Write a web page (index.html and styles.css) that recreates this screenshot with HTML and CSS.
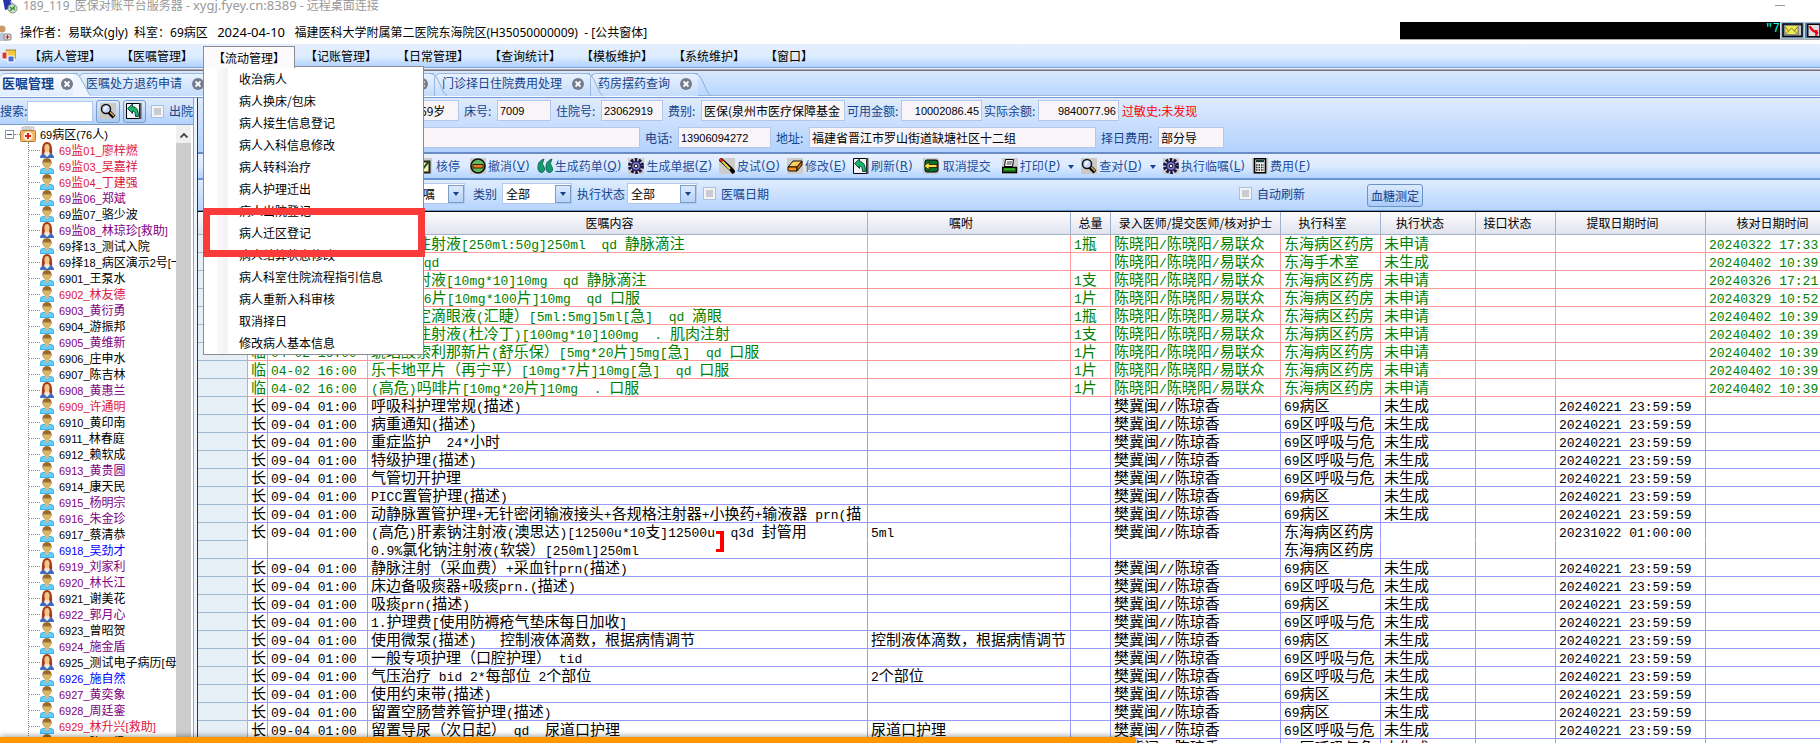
FILE: index.html
```html
<!DOCTYPE html>
<html lang="zh-CN">
<head>
<meta charset="utf-8">
<title>医嘱管理</title>
<link rel="stylesheet" href="styles.css">
</head>
<body>
<svg class="defs" aria-hidden="true">
  <symbol id="man" viewBox="0 0 14 16"><path d="M0 16v-3q0-3 4-3h6q4 0 4 3v3z" fill="#3fb4ee"/><path d="M1 15v-2q0-2 3-2h6q3 0 3 2v2z" fill="#66ccfa"/><path d="M5 9h4v2l-2 2-2-2z" fill="#e8b878"/><ellipse cx="7" cy="5.500" rx="4.200" ry="5" fill="#d8b56a"/><path d="M2.500 7Q1.500 0 7 0t4.500 7L10.500 4Q7 5 3.500 4z" fill="#9a6a2c"/></symbol>
  <symbol id="woman" viewBox="0 0 14 16"><path d="M2 13Q1 0 7 0t5 13z" fill="#a63c14"/><path d="M0 16q0-4 4-4.500l3 1 3-1q4 .5 4 4.500z" fill="#3c6cc0"/><path d="M5 9h4l1 3-3 3-3-3z" fill="#f6e4d4"/><ellipse cx="7" cy="6" rx="2.600" ry="4" fill="#f0c48c"/></symbol>
  <symbol id="ward" viewBox="0 0 16 16"><path d="M2 1h2v4H2zM5 0h2v4H5zM8 0h2v4H8zM11 1h3v4h-3z" fill="#e4e4e4" stroke="#999" stroke-width=".5"/><rect x=".5" y="4.500" width="15" height="11" rx="1" fill="#f3b562" stroke="#b87a38"/><circle cx="8" cy="10" r="4.500" fill="#fff4e4"/><path d="M7 7h2v2h2v2H9v2H7v-2H5V9h2z" fill="#e02010"/></symbol>
  <symbol id="search" viewBox="0 0 16 16"><path d="M0 0h16v16H0z" fill="#ccc8c4"/><path d="M9 9l5 5" stroke="#000" stroke-width="4"/><path d="M10 9l4 4" stroke="#e8b050" stroke-width="1.500"/><circle cx="6" cy="6" r="4.500" fill="#c8d8fa" stroke="#111" stroke-width="1.500"/><path d="M4 7l3-4" stroke="#fff" stroke-width="1.500"/></symbol>
  <symbol id="refresh" viewBox="0 0 16 16"><path d="M.5.5h13v15H.5z" fill="#f4f4f4" stroke="#000"/><path d="M14.500 0v16" stroke="#555" stroke-width="2"/><path d="M1.500 5.500L6.500 1v2.500q6 .5 6 10H9.500q0-5.500-3-5.500v2.500z" fill="#18b868" stroke="#023" stroke-width=".8"/></symbol>
  <symbol id="check" viewBox="0 0 16 16"><path d="M0 0h16v16H0z" fill="#ccc"/><path d="M1.500 3.500h12v11h-12z" fill="#f3f0b0" stroke="#222" stroke-width="2"/><path d="M4 9l2 3 7-9" stroke="#174a18" stroke-width="2" fill="none"/></symbol>
  <symbol id="minus" viewBox="0 0 16 16"><path d="M0 0h16v16H0z" fill="#ccc"/><circle cx="8" cy="8" r="7" fill="#62b85c" stroke="#111" stroke-width="1.600"/><rect x="3" y="6.500" width="10" height="3.500" fill="#f27820" stroke="#320" /></symbol>
  <symbol id="quote" viewBox="0 0 16 16"><path d="M7 1Q0 3 1 11q1 4 4 3.500Q9 13 7 9 4 6 7 1zM15 1Q8 3 9 11q1 4 4 3.500Q17 13 15 9q-3-3 0-8z" fill="#149a70" stroke="#075540" stroke-width=".8"/></symbol>
  <symbol id="gear" viewBox="0 0 16 16"><path d="M0 0h16v16H0z" fill="#d0cccc"/><circle cx="8" cy="8" r="6.500" fill="none" stroke="#18143c" stroke-width="3" stroke-dasharray="2.600 1.480"/><circle cx="8" cy="8" r="4.500" fill="#8580d0" stroke="#242060" stroke-width="1.500"/><circle cx="8" cy="8" r="1.800" fill="#fff" stroke="#111"/></symbol>
  <symbol id="pen" viewBox="0 0 16 16"><path d="M0 0h16v16H0z" fill="#ccc"/><path d="M1 1l11 10 3 4" stroke="#000" stroke-width="4" fill="none"/><path d="M3 3l8 8" stroke="#f2d838" stroke-width="2"/><path d="M1 1l2.500 2.500" stroke="#e02818" stroke-width="2.500"/></symbol>
  <symbol id="eraser" viewBox="0 0 16 16"><path d="M0 0h16v16H0z" fill="#ccc"/><path d="M1 9l5-6h9l-5 6z" fill="#ffc860" stroke="#110"/><path d="M1 9h9v4H2q-1 0-1-1z" fill="#f89020" stroke="#110"/><path d="M10 9l5-6v4l-5 6z" fill="#d07010" stroke="#110"/></symbol>
  <symbol id="undo" viewBox="0 0 16 16"><path d="M0 0h16v16H0z" fill="#ccc"/><rect x="2" y="2" width="13" height="12" rx="2" fill="#087030" stroke="#000"/><path d="M1 8l5-4v2.500h8v3H6V12z" fill="#f4e23c" stroke="#210" stroke-width=".8"/></symbol>
  <symbol id="print" viewBox="0 0 16 16"><path d="M0 0h16v16H0z" fill="#ccc"/><path d="M3.500 1.500h8l-1 7h-8z" fill="#fff" stroke="#000"/><path d="M5 4h5M4.500 6h5" stroke="#333"/><path d="M.5 9.500h14v5H.5z" fill="#1c7c1c" stroke="#000" stroke-width="1.400"/><path d="M2 11h11" stroke="#58e038"/></symbol>
  <symbol id="calc" viewBox="0 0 16 16"><path d="M0 0h16v16H0z" fill="#ccc"/><path d="M2.500.8h11v14h-11z" fill="#eee" stroke="#000" stroke-width="1.600"/><path d="M4 3h8" stroke="#1c3c3c" stroke-width="2.500"/><path d="M4 7h8M4 9.500h8M4 12h8" stroke="#222" stroke-width="1.300" stroke-dasharray="1.500 1"/></symbol>
  <symbol id="close" viewBox="0 0 12 12"><circle cx="6" cy="6" r="6" fill="#737c8c"/><path d="M3.500 3.500l5 5M8.500 3.500l-5 5" stroke="#fff" stroke-width="1.800"/></symbol>
  <symbol id="down" viewBox="0 0 6 4"><path d="M0 0h6L3 4z" fill="#15428b"/></symbol>
  <symbol id="slant" viewBox="0 0 18 23"><path d="M0 .5Q6 0 9 7l5 11q2 4 4 4.500" fill="none" stroke="#8fb0dc"/></symbol>
  <symbol id="slant-on" viewBox="0 0 18 23"><path d="M0 .5Q5 0 8 6l6 11q2 5 4 6H0z" fill="#f0f6fe"/><path d="M0 .5Q5 0 8 6l6 11q2 5 4 5.500" fill="none" stroke="#8fb0dc"/></symbol>
</svg>

<header class="titlebar">
  <svg class="title-icon" viewBox="0 0 15 14"><path d="M0 0h8l2 8-8 2z" fill="#2333ac"/><path d="M8 1l3 6" stroke="#ccd" stroke-width="2"/><circle cx="9.500" cy="8.500" r="4.500" fill="#d0dccc" stroke="#8a928a"/><path d="M7 7l2 2-2 2M12 6l-2 2 2 2" stroke="#2a8a2a" stroke-width="1.300" fill="none"/></svg>
  <span>189_119_医保对账平台服务器 - <b>xygj.fyey.cn:8389</b> - 远程桌面连接</span>
  <i class="minimize"></i>
</header>
<div class="operator">
  <svg class="op-icon" viewBox="0 0 12 16"><circle cx="2" cy="4" r="3.500" fill="#c89a62"/><path d="M0 8h4l3 3v5H0z" fill="#b8c8dc"/><rect x="4" y="9" width="7" height="6" rx="1" fill="#d8d8d8" stroke="#888"/><path d="M7 10h1v1.500h1.500v1H8V14H7v-1.500H5.500v-1H7z" fill="#e01010"/></svg>
  <span>操作者：易联众(gly)&nbsp; 科室：69病区&nbsp;&nbsp; <b>2024-04-10</b>&nbsp;&nbsp; 福建医科大学附属第二医院东海院区(H35050000009)&nbsp; - [公共窗体]</span>
  <div class="notice"><span class="marquee">"7</span>
    <svg class="mail" viewBox="0 0 24 17"><path d="M0 0h24v17H0z" fill="#8fb4d4"/><path d="M2.500 2h19v12.500h-19z" fill="#888" stroke="#000" stroke-width="1.500"/><path d="M5 4h12v8H5z" fill="#f0ec50"/><path d="M5 5l3 4 3-3 3 3 3-4M5 12l3-3M14 9l3 3" stroke="#777430" fill="none"/><path d="M19.500 4v9" stroke="#fff"/></svg>
    <svg class="mute" viewBox="0 0 16 17"><path d="M0 0h16v17H0z" fill="#55779c"/><path d="M3 2h13v13H3z" fill="#ddd" stroke="#000" stroke-width="1.500"/><path d="M5 4q3 6 9 7M12 8v6" stroke="#f00018" stroke-width="2.500" fill="none"/></svg>
  </div>
</div>

<nav class="menubar">
  <svg class="app-icon" viewBox="0 0 14 14"><path d="M4 1h10v8H4z" fill="#f4c83c" stroke="#946c10" stroke-width=".8"/><path d="M0 3h5v7H0z" fill="#d83828" stroke="#fff"/><path d="M6 7h6v6H6z" fill="#4870d0" stroke="#fff"/></svg>
  <button>【病人管理】</button>
  <button>【医嘱管理】</button>
  <div class="menu-open">
    <button class="current">【流动管理】</button>
    <div class="dropdown">
      <button>收治病人</button><button>病人换床/包床</button><button>病人接生信息登记</button><button>病人入科信息修改</button><button>病人转科治疗</button><button>病人护理迁出</button><button>病人出院登记</button><button>病人迁区登记</button><button>病人结算状态修改</button><button>病人科室住院流程指引信息</button><button>病人重新入科审核</button><button>取消择日</button><button>修改病人基本信息</button>
      <i class="highlight"></i>
    </div>
  </div>
  <button>【记账管理】</button>
  <button>【日常管理】</button>
  <button>【查询统计】</button>
  <button>【模板维护】</button>
  <button>【系统维护】</button>
  <button>【窗口】</button>
</nav>

<div class="tabs">
  <div class="tab active"><span>医嘱管理</span><svg class="x"><use href="#close"/></svg><svg class="slant"><use href="#slant-on"/></svg></div>
  <div class="tab"><span>医嘱处方退药申请</span><svg class="x"><use href="#close"/></svg><svg class="slant"><use href="#slant"/></svg></div>
  <div class="tab wide"><span>住院病人费用查询</span><svg class="x"><use href="#close"/></svg><svg class="slant"><use href="#slant"/></svg></div>
  <div class="tab"><span>门诊择日住院费用处理</span><svg class="x"><use href="#close"/></svg><svg class="slant"><use href="#slant"/></svg></div>
  <div class="tab"><span>药房摆药查询</span><svg class="x"><use href="#close"/></svg><svg class="slant"><use href="#slant"/></svg></div>
</div>

<div class="workspace">
  <aside class="side">
    <div class="searchbar">
      <label for="q">搜索:</label><input id="q" type="text">
      <button class="icon-btn" aria-label="搜索"><svg><use href="#search"/></svg></button>
      <button class="icon-btn" aria-label="刷新"><svg><use href="#refresh"/></svg></button>
      <label class="tick"><input type="checkbox">出院</label>
    </div>
    <div class="tree-wrap">
      <div class="tree">
        <div class="root"><i class="fold"></i><i class="stub"></i><svg><use href="#ward"/></svg><span class="mixed">69病区(76人)</span></div>
        <ul id="tree"></ul>
      </div>
      <div class="scroll"><svg viewBox="0 0 8 5"><path d="M.5 4.500L4 1l3.500 3.500" fill="none" stroke="#444" stroke-width="1.800"/></svg><i></i></div>
    </div>
  </aside>

  <main class="main">
    <section class="patient">
      <div class="row first">
        <input class="w-age" aria-label="年龄" value="69岁">
        <label for="f1" class="l2">床号:</label><input id="f1" class="w-bed num" value="7009">
        <label for="f2" class="l3">住院号:</label><input id="f2" class="w-no num" value="23062919">
        <label for="f3" class="l2">费别:</label><input id="f3" class="w-fee" value="医保(泉州市医疗保障基金">
        <label for="f4" class="l4 tight">可用金额:</label><input id="f4" class="w-sum num right" value="10002086.45">
        <label for="f5" class="l4 tight">实际余额:</label><input id="f5" class="w-sum num right" value="9840077.96">
        <span class="allergy">过敏史:未发现</span>
      </div>
      <div class="row second">
        <input class="w-diag" aria-label="诊断" value="">
        <label for="f6" class="l2">电话:</label><input id="f6" class="w-tel num" value="13906094272">
        <label for="f7" class="l2">地址:</label><input id="f7" class="w-addr" value="福建省晋江市罗山街道缺塘社区十二组">
        <label for="f8" class="l4">择日费用:</label><input id="f8" class="w-day" value="部分导">
      </div>
    </section>
    <div class="toolbar">
      <button class="stop"><svg><use href="#check"/></svg>核停</button>
      <button><svg><use href="#minus"/></svg>撤消<span>(<u>V</u>)</span></button>
      <button><svg><use href="#quote"/></svg>生成药单<span>(<u>Q</u>)</span></button>
      <button><svg><use href="#gear"/></svg>生成单据<span>(<u>Z</u>)</span></button>
      <button><svg><use href="#pen"/></svg>皮试<span>(<u>O</u>)</span></button>
      <button><svg><use href="#eraser"/></svg>修改<span>(<u>E</u>)</span></button>
      <button><svg><use href="#refresh"/></svg>刷新<span>(<u>R</u>)</span></button>
      <button class="cancel"><svg><use href="#undo"/></svg>取消提交</button>
      <button><svg><use href="#print"/></svg>打印<span>(<u>P</u>)</span><svg class="more"><use href="#down"/></svg></button>
      <button><svg><use href="#search"/></svg>查对<span>(<u>D</u>)</span><svg class="more"><use href="#down"/></svg></button>
      <button><svg><use href="#gear"/></svg>执行临嘱<span>(<u>L</u>)</span></button>
      <button><svg><use href="#calc"/></svg>费用<span>(<u>F</u>)</span></button>
    </div>
    <div class="filters">
      <span class="combo kind"><select aria-label="医嘱"><option>全部医嘱</option></select><i><svg><use href="#down"/></svg></i></span>
      <label for="s1">类别</label>
      <span class="combo"><select id="s1"><option>全部</option></select><i><svg><use href="#down"/></svg></i></span>
      <label for="s2" class="state">执行状态</label>
      <span class="combo"><select id="s2"><option>全部</option></select><i><svg><use href="#down"/></svg></i></span>
      <label class="tick date"><input type="checkbox">医嘱日期</label>
      <label class="tick auto"><input type="checkbox">自动刷新</label>
      <button class="sugar">血糖测定</button>
    </div>
    <div class="grid-wrap">
      <table class="grid">
        <colgroup><col class="c0"><col class="c1"><col class="c2"><col class="c3"><col class="c4"><col class="c5"><col class="c6"><col class="c7"><col class="c8"><col class="c9"><col class="c10"><col class="c11"></colgroup>
        <thead><tr><th></th><th></th><th></th><th>医嘱内容</th><th>嘱咐</th><th class="full">总量</th><th class="full">录入医师/提交医师/核对护士</th><th>执行科室</th><th>执行状态</th><th>接口状态</th><th>提取日期时间</th><th>核对日期时间</th></tr></thead>
        <tbody id="orders"></tbody>
      </table>
      <i class="group-mark"></i>
    </div>
  </main>
</div>
<div class="progress"></div>
<script src="app.js"></script>
</body>
</html>
```
FILE: app.js
```js
const patients = [
  ['69监01_廖梓燃', 'red', 'woman'], ['69监03_吴嘉祥', 'red'], ['69监04_丁建强', 'red'],
  ['69监06_郑斌', 'purple'], ['69监07_骆少波', ''], ['69监08_林琼珍[救助]', 'purple', 'woman'],
  ['69择13_测试入院', ''], ['69择18_病区演示2号[一]', '', 'woman'], ['6901_王泵水', ''],
  ['6902_林友德', 'red'], ['6903_黄衍勇', 'purple'], ['6904_游振邦', ''], ['6905_黄维新', 'purple'],
  ['6906_庄申水', ''], ['6907_陈吉林', ''], ['6908_黄惠兰', 'purple', 'woman'], ['6909_许通明', 'red'],
  ['6910_黄印南', ''], ['6911_林春庭', ''], ['6912_赖软成', ''], ['6913_黄贵圆', 'purple'],
  ['6914_康天民', ''], ['6915_杨明宗', 'purple'], ['6916_朱金珍', 'purple'], ['6917_蔡清恭', ''],
  ['6918_吴劲才', 'blue'], ['6919_刘家利', 'purple', 'woman'], ['6920_林长江', 'purple'],
  ['6921_谢美花', '', 'woman'], ['6922_郭月心', 'purple', 'woman'], ['6923_曾昭贺', ''],
  ['6924_施金盾', 'purple'], ['6925_测试电子病历[母]', '', 'woman'], ['6926_施自然', 'blue'],
  ['6927_黄奕象', 'purple'], ['6928_周廷銮', 'purple'], ['6929_林升兴[救助]', 'red'], ['6930_陈国梁', '']
];

const drug = '东海病区药房', unit = '69区呼吸与危', ward = '69病区';
const temporary = [
  ['甘露醇注射液[250ml:50g]250ml  qd 静脉滴注', '1瓶', drug, '未申请', '20240322 17:33:10'],
  ['测血糖 qd', '', '东海手术室', '未生成', '20240402 10:39:12'],
  ['安定注射液[10mg*10]10mg  qd 静脉滴注', '1支', drug, '未申请', '20240326 17:21:40'],
  ['维生素B6片[10mg*100片]10mg  qd 口服', '1片', drug, '未申请', '20240329 10:52:31'],
  ['奥洛他定滴眼液(汇睫）[5ml:5mg]5ml[急]  qd 滴眼', '1瓶', drug, '未申请', '20240402 10:39:12'],
  ['哌替啶注射液(杜冷丁)[100mg*10]100mg  . 肌肉注射', '1支', drug, '未申请', '20240402 10:39:12'],
  ['琥珀酸索利那新片(舒乐保）[5mg*20片]5mg[急]  qd 口服', '1片', drug, '未申请', '20240402 10:39:12'],
  ['乐卡地平片（再宁平）[10mg*7片]10mg[急]  qd 口服', '1片', drug, '未申请', '20240402 10:39:12'],
  ['(高危)吗啡片[10mg*20片]10mg  . 口服', '1片', drug, '未申请', '20240402 10:39:12']
];
const standing = [
  ['呼吸科护理常规(描述)', '', ward], ['病重通知(描述)', '', unit], ['重症监护  24*小时', '', unit],
  ['特级护理(描述)', '', unit], ['气管切开护理', '', unit], ['PICC置管护理(描述)', '', ward],
  ['动静脉置管护理+无针密闭输液接头+各规格注射器+小换药+输液器 prn(描', '', ward],
  ['(高危)肝素钠注射液(澳思达)[12500u*10支]12500u  q3d 封管用', '5ml', drug, '20231022 01:00:00', '0.9%氯化钠注射液(软袋）[250ml]250ml'],
  ['静脉注射（采血费）+采血针prn(描述)', '', ward], ['床边备吸痰器+吸痰prn.(描述)', '', unit],
  ['吸痰prn(描述)', '', ward], ['1.护理费[使用防褥疮气垫床每日加收]', '', unit],
  ['使用微泵(描述)   控制液体滴数，根据病情调节', '控制液体滴数，根据病情调节', ward],
  ['一般专项护理（口腔护理） tid', '', unit], ['气压治疗 bid 2*每部位 2个部位', '2个部位', unit],
  ['使用约束带(描述)', '', ward], ['留置空肠营养管护理(描述)', '', ward],
  ['留置导尿（次日起） qd  尿道口护理', '尿道口护理', unit], ['留置胃管护理(描述)', '', unit]
];

// Latin runs get their own half-width face beside the full-width characters.
const mixed = s => s.replace(/[\x20-\x7e]+/g, m => `<span class="lat">${m}</span>`);
const cell = s => `<td>${mixed(s)}</td>`;
const row = (kind, cells) => `<tr class="${kind}"><th></th>${cells.map(cell).join('')}</tr>`;

document.querySelector('.root .mixed').innerHTML = mixed('69病区(76人)');
document.getElementById('tree').innerHTML = patients.map(([name, color, icon]) =>
  `<li class="${color}"><i class="stub"></i><svg><use href="#${icon || 'man'}"/></svg><span>${mixed(name)}</span></li>`).join('');

const rows = temporary.map(([text, qty, dept, state, time]) =>
  row('temp', ['临', '04-02 16:00', text, '', qty, '陈晓阳/陈晓阳/易联众', dept, state, '', '', time]));
standing.forEach(([text, note, dept, time, second]) => {
  rows.push(row(second ? 'long joined' : 'long',
    ['长', '09-04 01:00', text, note, '', '樊冀闽//陈琼香', dept, second ? '' : '未生成', '', time || '20240221 23:59:59', '']));
  // The second drug of a group shares the frame of the first.
  if (second) rows.push(row('long', ['', '', second, '', '', '', dept, '', '', '', '']));
});
document.getElementById('orders').innerHTML = rows.join('');
```
FILE: styles.css
```css
* { box-sizing: border-box; }
body {
  margin: 0; height: 100vh; overflow: hidden; position: relative;
  display: flex; flex-direction: column;
  font: 12px/16px "Noto Sans CJK SC", sans-serif; color: #000; background: #fff;
}
button, input, select { font: inherit; color: inherit; margin: 0; }
button { padding: 0; border: 0; background: none; white-space: nowrap; }
svg { display: block; flex: none; }
.defs { position: absolute; width: 0; height: 0; }

.titlebar { flex: none; height: 22px; display: flex; align-items: flex-start; gap: 5px; padding-left: 3px; color: #999; }
.titlebar span { font-family: "Noto Sans", "Noto Sans CJK SC", sans-serif; line-height: 12px; white-space: nowrap; }
.titlebar b, .operator b { font-weight: normal; font-size: 13px; line-height: 0; }
.title-icon { width: 15px; height: 14px; }
.minimize { width: 10px; height: 1px; background: #999; margin: 5px 35px 0 auto; }

.operator { flex: none; height: 22px; display: flex; align-items: center; gap: 8px; }
.operator > span { font-family: "Noto Sans", "Noto Sans CJK SC", sans-serif; white-space: nowrap; }
.op-icon { width: 12px; height: 16px; }
.notice { margin-left: auto; width: 420px; height: 18px; align-self: flex-start; display: flex; border-bottom: 1px solid #aaa; overflow: hidden; }
.marquee { flex: 1; background: #000; color: #0ff; text-align: right; line-height: 14px; font-family: "Liberation Mono", monospace; }
.mail { width: 25px; height: 17px; }
.mute { width: 15px; height: 17px; }

.menubar {
  flex: none; height: 24px; display: flex; padding-left: 2px; position: relative; z-index: 5;
  background: linear-gradient(#e5eefd, #dcecff 55%, #afd2ff); border-bottom: 1px solid #7ba3d8;
}
.app-icon { width: 14px; height: 14px; margin: 5px 3px 0 0; }
.menubar > button, .current { padding: 0 10px; height: 24px; line-height: 24px; }
.menu-open { position: relative; width: 92px; }
.menubar .current { position: relative; z-index: 2; margin-top: 2px; padding: 0 9px; height: 22px; line-height: 20px; background: #fdfafd; border: 1px solid #8c8c94; border-bottom: 0; }
.dropdown {
  position: absolute; left: 0; top: 22px; width: 221px; z-index: 1; padding: 1px 0 0;
  display: flex; flex-direction: column; border: 1px solid #8c8c94;
  background: linear-gradient(90deg, #fff 13px, #fbf8fb 13px, #f3f1f5 24px, #fff 24px);
}
.dropdown button { height: 22px; line-height: 22px; padding-left: 35px; text-align: left; }
.highlight { position: absolute; left: -1px; top: 141px; width: 222px; height: 49px; border: 7px solid #fb3a3a; }

.tabs {
  flex: none; height: 30px; display: flex; padding-top: 5px;
  background: linear-gradient(#eef 0 1px, #b0a8b0 1px 2px, #776f76 2px 3px, transparent 3px), linear-gradient(#dceafc, #b7d6ff);
  border-bottom: 1px solid #6f9bd6; box-shadow: inset 0 -1px #fff, inset 0 -2px #9cb8de; color: #15428b;
}
.tab { position: relative; height: 23px; padding: 0 6px 5px 7px; display: flex; align-items: center; gap: 10px; border: 1px solid #9ab8e2; border-width: 1px 0 0 1px; border-radius: 6px 0 0 0; background: linear-gradient(#e9f2fe, #c4dcfb); }
.tab.active { padding: 0 5px 5px 2px; gap: 7px; font-weight: bold; font-size: 13px; background: linear-gradient(#fff, #dfecfd); border-left: 0; }
.tab.wide { width: 224px; justify-content: space-between; }
.tab .x { width: 12px; height: 12px; margin-top: 2px; }
.tab .slant { position: absolute; z-index: 1; left: calc(100% - 5px); top: -1px; width: 18px; height: 23px; }

.workspace { flex: 1; min-height: 0; display: flex; gap: 3px; background: #edf3fc; }
.side { flex: none; width: 194px; display: flex; flex-direction: column; border-right: 1px solid #8aa4cc; overflow: hidden; }
.searchbar { flex: none; height: 27px; display: flex; align-items: center; background: linear-gradient(#deebfd, #b3d3fd); border-bottom: 1px solid #7b9cc8; color: #15428b; white-space: nowrap; }
.searchbar > label:first-child { width: 28px; }
.searchbar > input { width: 66px; height: 21px; border: 1px solid #b0c6ec; background: #fff; margin-right: 3px; }
.icon-btn { width: 24px; height: 23px; margin-right: 3px; border: 1px solid #7b9dcc; border-radius: 3px; background: linear-gradient(#dceafc, #a9c9f4); display: flex; align-items: center; justify-content: center; }
.icon-btn svg { width: 16px; height: 16px; }
.tick { display: flex; align-items: center; gap: 5px; }
.tick input { appearance: none; width: 13px; height: 13px; border: 1px solid #a9bfe3; background: #c9cbd2; box-shadow: inset 0 0 0 2px #f4f4f4; }
.searchbar .tick { margin-left: 2px; }
.tree-wrap { flex: 1; min-height: 0; display: flex; background: #fff; }
.tree { width: 176px; overflow: hidden; padding-top: 1px; white-space: nowrap; }
.root { height: 16px; display: flex; align-items: center; padding-left: 5px; }
.root svg { width: 16px; height: 16px; margin-right: 4px; }
.fold { width: 9px; height: 9px; border: 1px solid #8a94a8; background: linear-gradient(#30508c, #30508c) center / 5px 1px no-repeat; }
.stub { flex: none; border-top: 1px dotted #888; width: 6px; height: 1px; }
.tree ul { margin: 0 0 0 28px; padding: 0; list-style: none; border-left: 1px dotted #888; }
.tree li { height: 16px; display: flex; align-items: center; }
.tree li .stub { width: 11px; }
.tree li svg { width: 14px; height: 16px; margin-right: 5px; }
.tree .lat { font: 11px/0 "Liberation Sans", sans-serif; }
.red { color: #dc143c; }
.purple { color: #800080; }
.blue { color: #00f; }
.scroll { width: 15px; background: #f0f0f0; display: flex; flex-direction: column; align-items: center; }
.scroll svg { width: 8px; height: 5px; margin: 8px 0 5px; }
.scroll i { flex: 1; align-self: stretch; background: #cdcdcd; }

.main { flex: 1; min-width: 0; display: flex; flex-direction: column; border-left: 1px solid #24365c; }
.patient { flex: none; height: 56px; padding-top: 2px; display: flex; flex-direction: column; gap: 6px; background: linear-gradient(#deebfd, #b2d2fd); border-bottom: 2px solid #6a8cc4; color: #15428b; white-space: nowrap; }
.patient .row { display: flex; align-items: center; height: 21px; }
.patient label { flex: none; margin: 0 3px 0 5px; }
.patient label.tight { margin: 0 0 0 2px; }
.l2 { width: 30px; }
.l3 { width: 42px; }
.l4 { width: 54px; }
.patient input { flex: none; height: 21px; padding: 0 2px; border: 1px solid #b3c7ea; background: #f8f4f8; color: #000; }
.patient input.num { font: 11px "Liberation Sans", sans-serif; }
.patient input.right { text-align: right; }
.patient .first { padding-left: 201px; }
.patient .second { padding-left: 101px; }
.w-age { width: 60px; }
.patient .w-age { text-indent: 18px; }
.w-bed { width: 54px; }
.w-no { width: 62px; }
.w-fee { width: 144px; }
.w-sum { width: 81px; }
.w-diag { width: 341px; }
.w-tel { width: 93px; }
.w-addr { width: 287px; }
.w-day { width: 66px; }
.allergy { color: #f00; margin-left: 3px; }

.toolbar { flex: none; height: 26px; display: flex; align-items: center; gap: 7px; padding-left: 218px; background: linear-gradient(#e8effd, #dcebff 50%, #b4d4ff); border-bottom: 2px solid #6596d6; color: #1f4f9c; }
.toolbar button { display: flex; align-items: center; height: 18px; }
.toolbar svg { width: 16px; height: 16px; margin-right: 2px; }
.toolbar button span { font-family: "DejaVu Sans", sans-serif; }
.toolbar .stop { margin-right: 3px; }
.toolbar .stop svg, .toolbar .cancel svg { margin-right: 4px; }
.toolbar .cancel { margin: 0 4px 0 3px; }
.toolbar svg.more { width: 6px; height: 4px; margin: 2px 0 0 8px; }

.filters { flex: none; height: 32px; display: flex; align-items: center; padding: 0 0 4px 185px; background: linear-gradient(#dfecfd, #b4d4fe); border-bottom: 1px solid #000; box-shadow: inset 0 -1px #6596d6; color: #15428b; white-space: nowrap; }
.combo { display: grid; width: 70px; height: 21px; align-items: center; justify-items: end; }
.combo.kind { width: 82px; }
.combo select { grid-area: 1 / 1; appearance: none; width: 100%; height: 21px; padding: 0 0 0 3px; border: 1px solid #b3c7ea; border-radius: 0; background: #fff; color: #000; }
.combo i { grid-area: 1 / 1; width: 16px; height: 18px; margin-right: 1px; border: 1px solid #7b9dcc; background: linear-gradient(#dceafc, #b5d2f8); display: flex; align-items: center; justify-content: center; pointer-events: none; }
.combo i svg { width: 6px; height: 4px; }
.filters > label { margin: 0 5px 0 8px; }
.filters > .state { margin: 0 2px 0 5px; }
.filters > .date { margin: 0 0 0 6px; }
.filters > .auto { margin: 0 62px 0 470px; }
.sugar { height: 23px; margin-top: 4px; padding: 0 3px; border: 1px solid #6c93c8; border-radius: 3px; background: linear-gradient(#dceafc, #a9cbf8); }

.grid-wrap { flex: 1; min-height: 0; position: relative; overflow: hidden; background: #fff; }
.grid { table-layout: fixed; width: 1658px; border-collapse: separate; border-spacing: 0; }
.c0 { width: 50px; } .c1 { width: 20px; } .c2 { width: 100px; } .c3 { width: 500px; }
.c4 { width: 203px; } .c5 { width: 40px; } .c6 { width: 170px; } .c7 { width: 100px; }
.c8 { width: 95px; } .c9 { width: 80px; } .c10 { width: 150px; } .c11 { width: 150px; }
.grid th, .grid td { padding: 0; height: 18px; border: 0 solid; border-width: 0 1px 1px 0; font-weight: normal; }
.grid thead th { height: 23px; padding-right: 16px; font-size: 12px; line-height: 22px; white-space: nowrap; border-color: #9db4cc; background: linear-gradient(#fcfcfe, #e2e2ee); }
.grid thead th.full { padding-right: 0; }
.grid tbody th { background: #e6eef6; border-color: #9db8d0; }
.grid td { padding-left: 3px; font-size: 15px; line-height: 15px; vertical-align: top; white-space: pre; }
.grid .lat { font: 13px/0 "Liberation Mono", monospace; }
.temp td { color: #008000; border-color: #ff9999; }
.long td { border-color: #9999ff; }
.joined td { border-bottom-color: transparent; }
.group-mark { position: absolute; left: 518px; top: 319px; width: 8px; height: 21px; border: solid #f00; border-width: 3px 4px 3px 0; }

.progress { position: absolute; left: 0; bottom: 0; z-index: 9; width: 62.4%; height: 6px; border-radius: 0 2px 0 0; background: #ff9800; box-shadow: 0 0 6px rgba(0, 0, 0, .5); }
```
